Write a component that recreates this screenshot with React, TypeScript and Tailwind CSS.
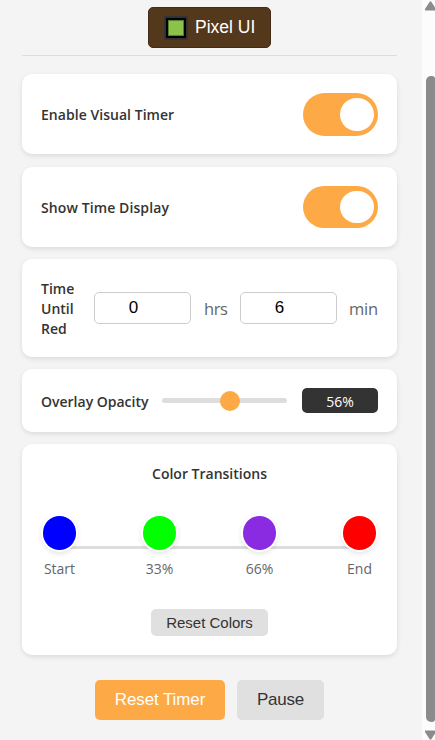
import type { ReactNode } from "react";

const SANS = "font-['Open_Sans','Noto_Sans',sans-serif]";
const ARIAL = "font-['Liberation_Sans',Arial,sans-serif]";

function Card({ className, children }: { className: string; children: ReactNode }) {
  return (
    <section className={`w-[375px] shrink-0 rounded-[10px] bg-white shadow-[0_2px_5px_rgba(0,0,0,0.1)] ${className}`}>
      {children}
    </section>
  );
}

function Label({ className = "", children }: { className?: string; children: ReactNode }) {
  return <span className={`text-[14px] leading-5 font-semibold text-[#333] ${className}`}>{children}</span>;
}

function Toggle({ className, knob }: { className: string; knob: string }) {
  return (
    <button role="switch" aria-checked="true" className={`flex w-[75px] items-start justify-end rounded-full bg-[#fda945] pt-[5px] pr-[4px] ${className}`}>
      <span className={`w-[34px] rounded-full bg-white ${knob}`} />
    </button>
  );
}

function NumberBox({ value }: { value: string }) {
  return (
    <div className={`flex h-8 w-[97px] shrink-0 items-center justify-center rounded-[5px] border border-[#ccc] bg-white pr-[18px] text-[17px] text-black ${ARIAL}`}>
      {value}
    </div>
  );
}

const stops = [
  { label: "Start", color: "bg-[#0000ff]" },
  { label: "33%", color: "bg-[#00ff00]" },
  { label: "66%", color: "bg-[#8a2be2]" },
  { label: "End", color: "bg-[#ff0000]" },
];

export default function App() {
  return (
    <div className={`flex h-[740px] w-[435px] overflow-hidden bg-[#f4f4f4] ${SANS}`}>
      <main className="flex w-[422px] shrink-0 flex-col pl-[22px]">
        <header className="flex h-[56px] w-[375px] shrink-0 justify-center border-b border-[#ddd] pt-[7px]">
          <button className={`flex h-[41px] w-[123px] items-center rounded-[5px] border border-[#442b18] bg-[#54381b] pl-[15px] text-[17.5px] text-white ${ARIAL}`}>
            <span className="mr-[7px] flex size-6 items-center justify-center border-2 border-[#333] bg-black">
              <span className="size-4 border border-[#56802d] bg-[#8bc34a]" />
            </span>
            <span>Pixel UI</span>
          </button>
        </header>

        <Card className="mt-[18px] flex h-[80px] items-start justify-between px-[19px] pt-[19px]">
          <Label className="mt-3 tracking-[0.04px]">Enable Visual Timer</Label>
          <Toggle className="h-[43px]" knob="h-[33px]" />
        </Card>

        <Card className="mt-[13px] flex h-[80px] items-start justify-between px-[19px] pt-[19px]">
          <Label className="mt-3 tracking-[0.1px]">Show Time Display</Label>
          <Toggle className="h-[42px]" knob="h-[32px]" />
        </Card>

        <Card className="mt-3 flex h-[98px] items-center px-[19px]">
          <Label className="w-[53px] shrink-0 pt-[2px] pr-3">Time Until Red</Label>
          <NumberBox value="0" />
          <span className="w-[49px] shrink-0 pt-[3px] pl-[13px] text-[16.5px] tracking-[-0.4px] text-[#666]">hrs</span>
          <NumberBox value="6" />
          <span className="pt-[3px] pl-3 text-[16.5px] tracking-[-0.2px] text-[#666]">min</span>
        </Card>

        <Card className="mt-3 flex h-[63px] items-center px-[19px]">
          <Label className="w-[121px] shrink-0 pt-[2px] whitespace-nowrap">Overlay Opacity</Label>
          <div className="flex h-5 w-[125px] shrink-0 items-center">
            <span className="h-[5px] w-[60px] rounded-l-full bg-[#ddd]" />
            <span className="relative -mx-[2px] size-5 rounded-full bg-[#fda945]" />
            <span className="h-[5px] flex-1 rounded-r-full bg-[#ddd]" />
          </div>
          <span className="ml-[15px] flex h-[25px] w-[76px] items-center justify-center rounded-[5px] bg-[#333] pt-px text-[14px] text-white">
            56%
          </span>
        </Card>

        <Card className="mt-3 flex h-[211px] flex-col items-center pt-[20px]">
          <Label>Color Transitions</Label>
          <div className="relative mt-[30px] flex w-[337px] justify-between">
            <span className="absolute top-[32px] right-[18px] left-[18px] h-[3px] bg-[#ddd]" />
            {stops.map((s) => (
              <div key={s.label} className="relative flex w-[37px] flex-col items-center">
                <span className="h-[38px] w-[37px] rounded-full bg-white p-[2px] shadow-[0_2px_5px_rgba(0,0,0,0.1)]">
                  <span className={`block size-full rounded-full ${s.color}`} />
                </span>
                <span className="mt-[7px] text-[14px] leading-5 whitespace-nowrap text-[#666]">{s.label}</span>
              </div>
            ))}
          </div>
          <button className={`mt-[30px] flex h-[27px] w-[117px] items-center justify-center rounded-[5px] bg-[#e0e0e0] pt-px text-[15px] text-[#333] ${ARIAL}`}>
            Reset Colors
          </button>
        </Card>

        <div className={`mt-[25px] flex w-[375px] justify-center gap-3 text-[17px] ${ARIAL}`}>
          <button className="h-10 w-[130px] rounded-[5px] bg-[#fda945] tracking-[-0.1px] text-white">Reset Timer</button>
          <button className="h-10 w-[87px] rounded-[5px] bg-[#e0e0e0] tracking-[-0.2px] text-[#333]">Pause</button>
        </div>
      </main>

      <aside className="flex w-[13px] shrink-0 flex-col items-end overflow-hidden bg-[#fcfcfc]">
        <svg className="h-[76px] w-[10px] shrink-0" viewBox="0 0 10 76">
          <path d="M0 10.5V9L4.5 2Q5.5 .5 6.5 2L11 9v1.5Z" fill="#8b8b8b" />
        </svg>
        <div className="h-[646px] w-[9px] shrink-0 rounded-l-[5px] rounded-tr-[3px] rounded-br-[3px] bg-[#8b8b8b]" />
        <svg className="h-[18px] w-[10px] shrink-0" viewBox="0 0 10 18">
          <path d="M0 8.5V10L4.5 17Q5.5 18.5 6.5 17L11 10V8.5Z" fill="#8b8b8b" />
        </svg>
      </aside>
    </div>
  );
}
